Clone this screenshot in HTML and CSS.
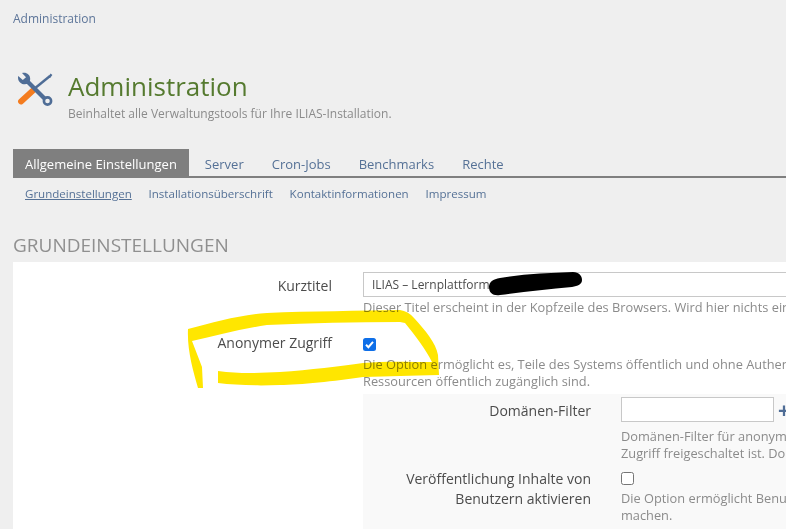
FILE: index.html
```html
<!DOCTYPE html>
<html lang="de">
<head>
<meta charset="utf-8">
<title>Administration</title>
<link rel="stylesheet" href="styles.css">
</head>
<body>
<div class="page">
  <nav class="crumbs"><a href="#">Administration</a></nav>
  <header class="head">
    <svg class="head-icon" viewBox="0 0 36 34" width="36" height="34" aria-hidden="true">
      <path d="M17 17 L33 4" stroke="#4f6d96" stroke-width="2.4" fill="none"/>
      <path d="M31 5 L33.6 1.4 L35.4 3 L33 6 Z" fill="#4f6d96"/>
      <path d="M4 29.5 L16 18.5" stroke="#f47c1f" stroke-width="5.8" stroke-linecap="round" fill="none"/>
      <path d="M9 8 L28 27" stroke="#4f6d96" stroke-width="4.2" fill="none"/>
      <path d="M1.2 4 L5.8 8 L9 5.2 L5 1 C9.5 -0.4 14.2 3 13 8.5 L10.5 11.8 C5.5 13.5 0 10 1.2 4 Z" fill="#4f6d96"/>
      <circle cx="30.5" cy="29" r="3.6" fill="#efefef" stroke="#4f6d96" stroke-width="2.6"/>
    </svg>
    <div>
      <h1 class="title">Administration</h1>
      <p class="subtitle">Beinhaltet alle Verwaltungstools für Ihre ILIAS-Installation.</p>
    </div>
  </header>
  <ul class="tabs">
    <li class="tab tab-active">Allgemeine Einstellungen</li>
    <li class="tab">Server</li>
    <li class="tab">Cron-Jobs</li>
    <li class="tab">Benchmarks</li>
    <li class="tab">Rechte</li>
  </ul>
  <ul class="subtabs">
    <li class="subtab subtab-active">Grundeinstellungen</li>
    <li class="subtab">Installationsüberschrift</li>
    <li class="subtab">Kontaktinformationen</li>
    <li class="subtab">Impressum</li>
  </ul>
  <h2 class="section">Grundeinstellungen</h2>
  <form class="panel">
    <div class="row row-first">
      <label class="label">Kurztitel</label>
      <div class="value">
        <div class="text-input wide">ILIAS – Lernplattform</div>
        <p class="info">Dieser Titel erscheint in der Kopfzeile des Browsers. Wird hier nichts eingetragen, wird der Standardtitel verwendet.</p>
      </div>
    </div>
    <div class="row row-second">
      <label class="label">Anonymer Zugriff</label>
      <div class="value">
        <span class="check check-on"><svg viewBox="0 0 13 13" width="13" height="13" aria-hidden="true"><path d="M3 6.8 L5.4 9.2 L10 3.8" fill="none" stroke="#fff" stroke-width="2"/></svg></span>
        <p class="info info-check">Die Option ermöglicht es, Teile des Systems öffentlich und ohne Authentifizierung zugänglich zu machen, sodass<br>Ressourcen öffentlich zugänglich sind.</p>
        <div class="sub">
          <div class="subrow">
            <label class="label sublabel">Domänen-Filter</label>
            <div class="subvalue">
              <div class="filter-line"><div class="text-input short"></div><span class="plus">+</span></div>
              <p class="info">Domänen-Filter für anonymen Zugriff, wenn der anonyme Benutzer<br>Zugriff freigeschaltet ist. Domänen werden geprüft.</p>
            </div>
          </div>
          <div class="subrow subrow-second">
            <label class="label sublabel">Veröffentlichung Inhalte von Benutzern aktivieren</label>
            <div class="subvalue">
              <span class="check"></span>
              <p class="info info-check2">Die Option ermöglicht Benutzern, Inhalte öffentlich zu<br>machen.</p>
            </div>
          </div>
        </div>
      </div>
    </div>
  </form>
  <svg class="scribble" viewBox="0 0 786 529" width="786" height="529" aria-hidden="true">
    <path d="M188 329 C215 322 240 315 267 313 C310 311 360 311 400 310 Q408 311 414 318 C425 330 436 343 438 355 L439 375 C410 376 390 376 363 377 C335 381 300 385 280 385 C255 386 235 385 218 383 L218 371 C240 374 260 373 280 372 C310 370 340 366 363 363 C385 361 410 362 432 362 C426 350 415 335 405 323 L400 322 C355 322 310 323 267 325 C240 329 215 336 192 341 L202 367 L203 388 L198 388 C193 370 187 350 188 329 Z" fill="#ffe600"/>
  </svg>
  <svg class="redact" viewBox="0 0 96 26" width="96" height="26" aria-hidden="true">
    <path d="M1 16 C1 11 5 8 12 7 C35 3 60 2 85 1 C91 1 94 5 94 9 C94 13 90 15 84 16 C60 18 35 21 12 24 C5 25 1 22 1 16 Z" fill="#000"/>
  </svg>
</div>
</body>
</html>
```
FILE: styles.css
```css
* { box-sizing: border-box; }
html, body { margin: 0; padding: 0; }
body {
  width: 786px;
  height: 529px;
  overflow: hidden;
  background: #efefef;
  font-family: "Open Sans", "Liberation Sans", sans-serif;
  font-size: 12px;
  color: #4c4c4c;
}
.page { position: relative; width: 786px; height: 529px; overflow: hidden; }
.crumbs { padding: 10px 13px 0; height: 70px; line-height: 17px; }
.crumbs a { color: #5d7599; text-decoration: none; font-size: 12px; }
.head { display: flex; padding-left: 17px; gap: 15px; height: 79px; }
.head-icon { margin-top: 2px; flex: none; }
.title { margin: -1px 0 0; font-size: 26px; font-weight: 400; line-height: 34px; color: #557a2f; }
.subtitle { margin: 2px 0 0; font-size: 12px; line-height: 17px; color: #8b8b8b; }
.tabs {
  display: flex;
  list-style: none;
  margin: 0 0 0 13px;
  padding: 0;
  height: 29px;
  border-bottom: 2px solid #7f7f7f;
}
.tab { padding: 0 12px; font-size: 13px; line-height: 30px; color: #557196; margin-right: 4px; white-space: nowrap; }
.tab-active { background: #7f7f7f; color: #fff; height: 29px; padding: 0 12px; margin-right: 4px; }
.subtabs { display: flex; list-style: none; margin: 7px 0 0 13px; padding: 0 0 0 12px; gap: 16.8px; line-height: 17px; }
.subtab { font-size: 11.55px; color: #557196; white-space: nowrap; }
.subtab-active { text-decoration: underline; }
.section {
  margin: 31px 0 0 13px;
  font-size: 19px;
  line-height: 24px;
  font-weight: 400;
  text-transform: uppercase;
  color: #8f8f8f;
}
.panel { margin: 5px 0 0 13px; width: 900px; height: 300px; background: #fff; }
.row { display: flex; }
.row-first { padding-top: 10px; }
.row-second { padding-top: 13px; }
.label { flex: none; width: 319px; text-align: right; font-size: 14px; line-height: 20px; color: #4c4c4c; padding-top: 4px; }
.row-second > .label { padding-top: 4px; }
.value { margin-left: 31px; width: 540px; flex: none; }
.text-input { height: 25px; border: 1px solid #c8c8c8; background: #fff; font-size: 12px; line-height: 23px; padding-left: 8px; color: #4c4c4c; white-space: nowrap; }
.wide { width: 540px; }
.short { width: 153px; }
.info { margin: 0; font-size: 12.8px; line-height: 17px; color: #8b8b8b; white-space: nowrap; }
.row-first .info { margin-top: 2px; }
.check { display: block; width: 13px; height: 13px; border: 1px solid #767676; border-radius: 2.5px; background: #fff; }
.check-on { border: none; background: #0f6fe8; margin-top: 9px; }
.check-on svg { display: block; }
.info-check { margin-top: 5px; }
.sub { margin-top: 4px; background: #f9f9f9; height: 140px; padding-top: 3px; }
.subrow { display: flex; }
.subrow-second { margin-top: 7px; }
.sublabel { width: 228px; padding-top: 4px; }
.subrow-second .sublabel { padding-top: 0; }
.subvalue { margin-left: 30px; flex: none; width: 300px; }
.filter-line { display: flex; align-items: center; gap: 4px; }
.plus { color: #4f6d96; font-size: 21px; font-weight: 700; line-height: 24px; }
.subvalue .filter-line + .info { margin-top: 6px; }
.subvalue .check { margin-top: 3px; }
.info-check2 { margin-top: 5px; }
.scribble { position: absolute; left: 0; top: 0; mix-blend-mode: multiply; pointer-events: none; }
.redact { position: absolute; left: 488px; top: 271px; }
```
